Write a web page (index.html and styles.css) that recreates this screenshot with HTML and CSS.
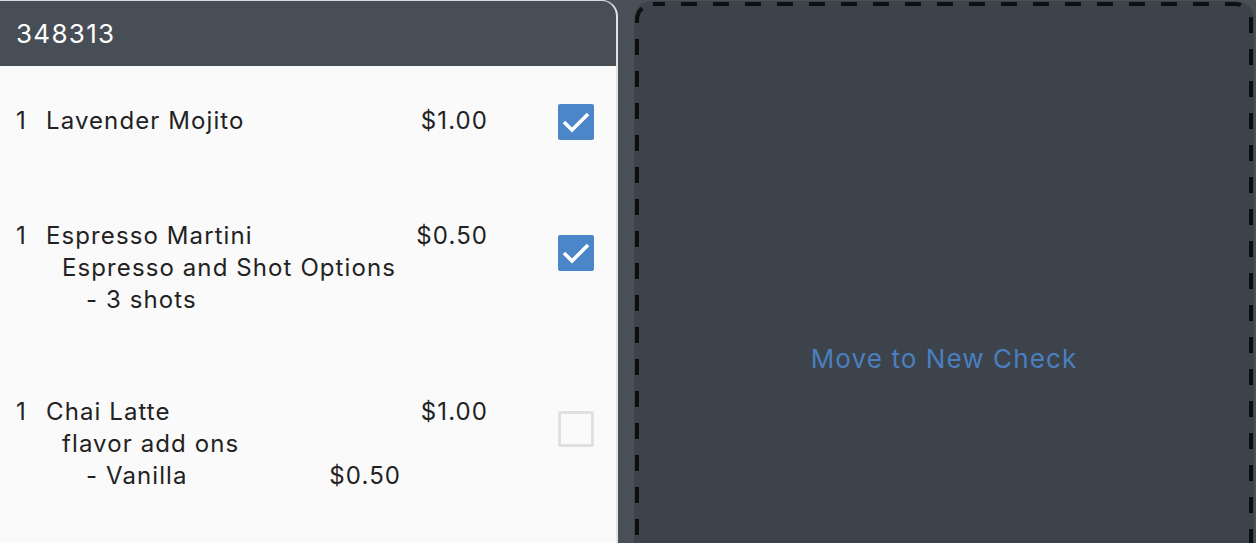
FILE: index.html
```html
<!DOCTYPE html>
<html>
<head>
<meta charset="utf-8">
<link rel="stylesheet" href="styles.css">
</head>
<body>
<div class="page">
  <section class="check">
    <header class="check-head">348313</header>
    <div class="items">
      <div class="item">
        <div class="item-body">
          <div class="line main"><span class="qty">1</span><span class="name">Lavender Mojito</span><span class="price">$1.00</span></div>
        </div>
        <span class="box checked single"><svg viewBox="0 0 36 36"><polyline points="6,18 14,26 30,10"/></svg></span>
      </div>
      <div class="item">
        <div class="item-body">
          <div class="line main"><span class="qty">1</span><span class="name">Espresso Martini</span><span class="price">$0.50</span></div>
          <div class="line group">Espresso and Shot Options</div>
          <div class="line mod"><span>- 3 shots</span></div>
        </div>
        <span class="box checked multi"><svg viewBox="0 0 36 36"><polyline points="6,18 14,26 30,10"/></svg></span>
      </div>
      <div class="item">
        <div class="item-body">
          <div class="line main"><span class="qty">1</span><span class="name">Chai Latte</span><span class="price">$1.00</span></div>
          <div class="line group">flavor add ons</div>
          <div class="line mod"><span>- Vanilla</span><span class="mod-price">$0.50</span></div>
        </div>
        <span class="box multi"></span>
      </div>
    </div>
  </section>
  <section class="drop">
    <svg class="drop-border" aria-hidden="true"><rect class="drop-rect"/></svg>
    <span class="drop-label">Move to New Check</span>
  </section>
</div>
</body>
</html>
```
FILE: styles.css
```css
html, body {
  margin: 0;
  padding: 0;
}
body {
  background: #4a5058;
  font-family: Inter, "Noto Sans", sans-serif;
  overflow: hidden;
}
.page {
  display: flex;
  gap: 16px;
  align-items: flex-start;
}
.check {
  width: 616px;
  flex: none;
  height: 720px;
  background: #fafafa;
  border-top: 1px solid #d9dadc;
  border-right: 2px solid #e2e2e2;
  border-top-right-radius: 16px;
  overflow: hidden;
}
.check-head {
  height: 65px;
  background: #484e56;
  color: #ffffff;
  font-size: 26px;
  letter-spacing: 1.3px;
  line-height: 65px;
  padding-left: 16px;
  box-sizing: border-box;
}
.item {
  display: flex;
  align-items: flex-start;
  padding: 39px 0 41px 16px;
}
.item-body {
  width: 471px;
}
.line {
  height: 32px;
  line-height: 32px;
  font-size: 24px;
  letter-spacing: 1.1px;
  color: #222222;
  white-space: nowrap;
}
.line.main {
  display: flex;
}
.qty {
  width: 30px;
}
.name {
  flex: 1;
}
.price {
  text-align: right;
  margin-right: -1.1px;
}
.mod-price {
  margin-right: -1.1px;
}
.line.group {
  padding-left: 46px;
}
.line.mod {
  display: flex;
  justify-content: space-between;
  margin-left: 70px;
  width: 314px;
}
.box {
  flex: none;
  width: 36px;
  height: 36px;
  box-sizing: border-box;
  margin-left: 71px;
  border: 3px solid #e0e0e0;
  border-radius: 2px;
  background: #fafafa;
}
.box.single {
  margin-top: -1px;
}
.box.multi {
  margin-top: 15px;
}
.box.checked {
  background: #4a86c8;
  border: none;
}
.box svg {
  display: block;
  width: 36px;
  height: 36px;
}
.box polyline {
  fill: none;
  stroke: #ffffff;
  stroke-width: 3.6;
  stroke-linecap: butt;
  stroke-linejoin: miter;
}
.drop {
  position: relative;
  flex: none;
  width: 620px;
  height: 714px;
  margin-top: 1px;
  background: #3d434a;
  border-radius: 18px;
  display: flex;
  align-items: center;
  justify-content: center;
}
.drop-border {
  position: absolute;
  inset: 0;
  width: 100%;
  height: 100%;
}
.drop-rect {
  x: 3px;
  y: 3px;
  width: calc(100% - 6px);
  height: calc(100% - 6px);
  rx: 16px;
  fill: none;
  stroke: #0d0f11;
  stroke-width: 4;
  stroke-dasharray: 16 16;
  stroke-dashoffset: 4;
}
.drop-label {
  font-size: 26px;
  letter-spacing: 1.1px;
  color: #4a7fc0;
}
```
